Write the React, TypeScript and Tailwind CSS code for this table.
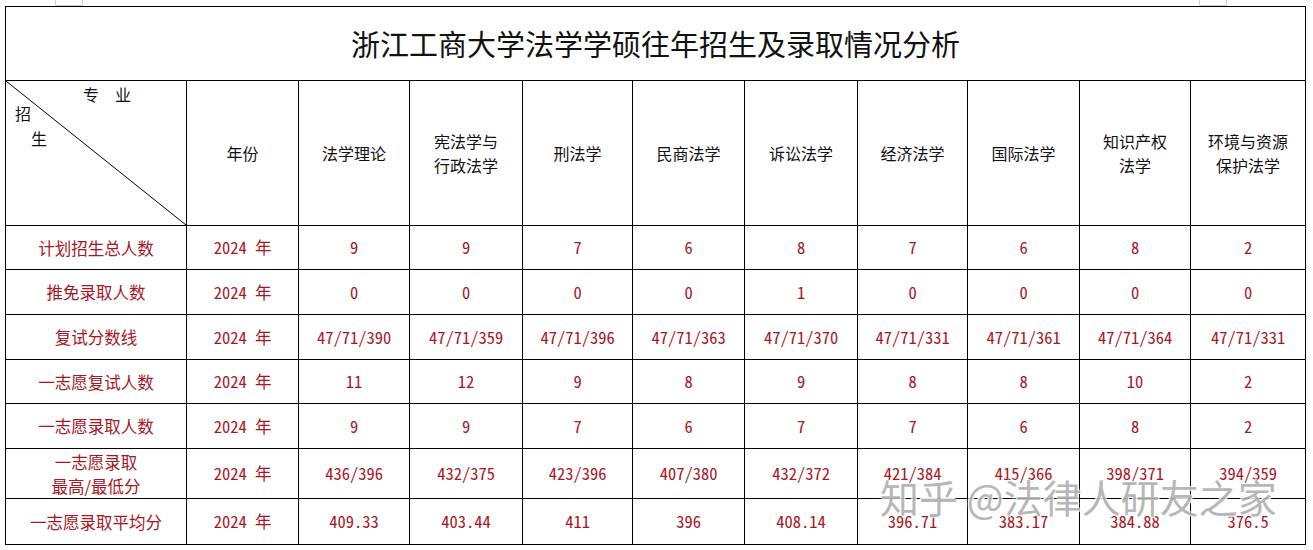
import React from "react";

const majors: string[][] = [
  ["法学理论"],
  ["宪法学与", "行政法学"],
  ["刑法学"],
  ["民商法学"],
  ["诉讼法学"],
  ["经济法学"],
  ["国际法学"],
  ["知识产权", "法学"],
  ["环境与资源", "保护法学"],
];

const rows: { label: string[]; h: string; vals: string[] }[] = [
  { label: ["计划招生总人数"], h: "h-[44px]", vals: ["9", "9", "7", "6", "8", "7", "6", "8", "2"] },
  { label: ["推免录取人数"], h: "h-[45px]", vals: ["0", "0", "0", "0", "1", "0", "0", "0", "0"] },
  {
    label: ["复试分数线"],
    h: "h-[45px]",
    vals: ["47/71/390", "47/71/359", "47/71/396", "47/71/363", "47/71/370", "47/71/331", "47/71/361", "47/71/364", "47/71/331"],
  },
  { label: ["一志愿复试人数"], h: "h-[44px]", vals: ["11", "12", "9", "8", "9", "8", "8", "10", "2"] },
  { label: ["一志愿录取人数"], h: "h-[45px]", vals: ["9", "9", "7", "6", "7", "7", "6", "8", "2"] },
  {
    label: ["一志愿录取", "最高/最低分"],
    h: "h-[50px]",
    vals: ["436/396", "432/375", "423/396", "407/380", "432/372", "421/384", "415/366", "398/371", "394/359"],
  },
  {
    label: ["一志愿录取平均分"],
    h: "h-[46px]",
    vals: ["409.33", "403.44", "411", "396", "408.14", "396.71", "383.17", "384.88", "376.5"],
  },
];

const widths = ["w-[181px]", "w-[112px]", "w-[111px]", "w-[113px]", "w-[110px]", "w-[112px]", "w-[113px]", "w-[110px]", "w-[112px]", "w-[111px]", "w-[115px]"];

export default function App() {
  return (
    <div className="w-[1313px] h-[550px] bg-white relative overflow-hidden font-['Noto_Sans_CJK_SC',sans-serif]">
      {/* top tab artifacts */}
      <div className="flex h-[6px]">
        <div className="ml-[55px] w-[28px] h-[6px] border border-t-0 border-[#d0d0d0]" />
        <div className="ml-[1116px] w-[28px] h-[6px] border border-t-0 border-[#d0d0d0]" />
      </div>
      <table className="ml-[5px] w-[1300px] table-fixed border-collapse border border-black">
        <colgroup>
          {widths.map((w, i) => (
            <col key={i} className={w} />
          ))}
        </colgroup>
        <tbody>
          <tr className="h-[74px]">
            <td colSpan={11} className="border border-black text-center align-middle text-[29px] text-[#111] leading-none">
              浙江工商大学法学学硕往年招生及录取情况分析
            </td>
          </tr>
          <tr className="h-[145px]">
            <td className="border border-black relative p-0">
              <svg className="absolute inset-0 w-full h-full" viewBox="0 0 181 145" preserveAspectRatio="none">
                <line x1="0" y1="0" x2="181" y2="145" stroke="#000" strokeWidth="1" />
              </svg>
              <span className="absolute left-[77px] top-[1px] text-[16px] text-[#111] tracking-[16px]">专业</span>
              <span className="absolute left-[9px] top-[20px] text-[16px] text-[#111]">招</span>
              <span className="absolute left-[25px] top-[45px] text-[16px] text-[#111]">生</span>
            </td>
            <td className="border border-black text-center align-middle text-[16px] text-[#111]">年份</td>
            {majors.map((m, i) => (
              <td key={i} className="border border-black text-center align-middle text-[16px] leading-[24px] text-[#111]">
                {m.map((l, j) => (
                  <div key={j}>{l}</div>
                ))}
              </td>
            ))}
          </tr>
          {rows.map((r, i) => (
            <tr key={i} className={r.h}>
              <td className="border border-black text-center align-middle text-[16.5px] leading-[24px] text-[#a8161f]">
                {r.label.map((l, j) => (
                  <div key={j}>{l}</div>
                ))}
              </td>
              <td className="border border-black text-center align-middle text-[16.5px] text-[#a8161f] font-['Noto_Sans_Mono_CJK_SC','Noto_Sans_CJK_SC',sans-serif]">
                2024 年
              </td>
              {r.vals.map((v, j) => (
                <td
                  key={j}
                  className="border border-black text-center align-middle text-[16.5px] text-[#a8161f] font-['Noto_Sans_Mono_CJK_SC','Noto_Sans_CJK_SC',sans-serif]"
                >
                  {v}
                </td>
              ))}
            </tr>
          ))}
        </tbody>
      </table>
      {/* watermark */}
      <div className="absolute left-[880px] top-[477px] text-[39px] leading-none text-[#b0b0b0] whitespace-nowrap [text-shadow:0_0_2px_#fff,0_0_2px_#fff,1px_1px_0_#fff,-1px_-1px_0_#fff] opacity-90">
        知乎 @法律人研友之家
      </div>
    </div>
  );
}
